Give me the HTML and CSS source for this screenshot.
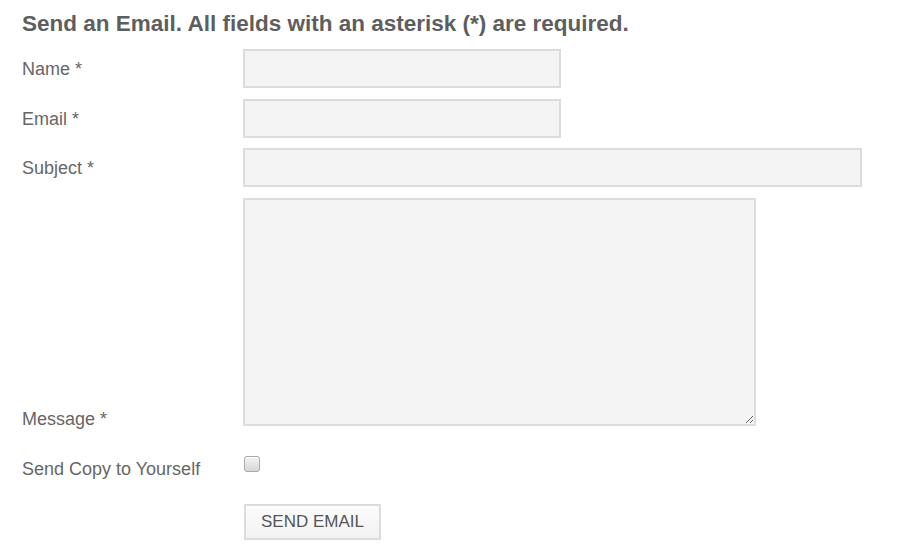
FILE: index.html
```html
<!DOCTYPE html>
<html lang="en">
<head>
  <meta charset="UTF-8">
  <meta name="viewport" content="width=device-width,initial-scale=1.0">
  <title>Send an Email</title>
  <link rel="stylesheet" href="styles.css">
</head>
<body>
  <div class="contact">
    <h1>Send an Email. All fields with an asterisk (*) are required.</h1>
    <form class="contact-form">
      <div class="row">
        <label for="name">Name *</label>
        <input type="text" id="name" class="field short">
      </div>
      <div class="row">
        <label for="email">Email *</label>
        <input type="email" id="email" class="field short">
      </div>
      <div class="row">
        <label for="subject">Subject *</label>
        <input type="text" id="subject" class="field long">
      </div>
      <div class="row row-message">
        <label for="message">Message *</label>
        <textarea id="message" class="field message"></textarea>
      </div>
      <div class="row row-check">
        <label for="copy">Send Copy to Yourself</label>
        <input type="checkbox" id="copy" class="check">
      </div>
      <div class="row row-submit">
        <span class="spacer"></span>
        <button type="submit" class="btn">SEND EMAIL</button>
      </div>
    </form>
  </div>
</body>
</html>
```

FILE: styles.css
```css
body {
  margin: 0;
  font-family: "Liberation Sans", Arial, sans-serif;
  background: #fff;
  color: #666;
}
.contact {
  padding: 0 22px;
}
.contact h1 {
  margin: 11px 0 12px 0;
  font-size: 22.5px;
  line-height: 26px;
  font-weight: 700;
  color: #5e5e5e;
}
.row {
  display: flex;
  align-items: center;
  margin-bottom: 11px;
}
.row:nth-child(2) {
  margin-bottom: 10px;
}
.row label,
.row .spacer {
  flex: 0 0 221px;
  font-size: 18px;
  line-height: 20px;
  color: #666;
}
.field {
  box-sizing: border-box;
  height: 39px;
  margin: 0;
  padding: 4px 8px;
  background: #f4f4f4;
  border: 2px solid #dcdcdc;
  border-radius: 0;
  font: inherit;
  color: #555;
  outline: none;
}
.field.short { width: 318px; }
.field.long { width: 619px; }
.field.message {
  width: 513px;
  height: 228px;
  resize: both;
}
.row-message {
  align-items: flex-end;
}
.row-message label {
  margin-bottom: -3px;
}
.row-check {
  align-items: flex-start;
  margin-top: 30px;
}
.row-check label {
  padding-top: 3px;
}
.check {
  appearance: none;
  -webkit-appearance: none;
  box-sizing: border-box;
  width: 16px;
  height: 16px;
  margin: 0 0 0 1px;
  border: 1px solid #a8a8a8;
  border-radius: 3px;
  background: linear-gradient(#f4f4f4, #d6d6d6);
  box-shadow: inset 0 1px 0 #fff;
}
.row-submit {
  margin-top: 25px;
}
.btn {
  box-sizing: border-box;
  width: 137px;
  height: 36px;
  margin-left: 1px;
  padding: 0;
  background: linear-gradient(#fcfcfc, #f2f2f2);
  border: 2px solid #dcdcdc;
  border-radius: 0;
  font-family: inherit;
  font-size: 17px;
  color: #555;
  cursor: pointer;
}
```
